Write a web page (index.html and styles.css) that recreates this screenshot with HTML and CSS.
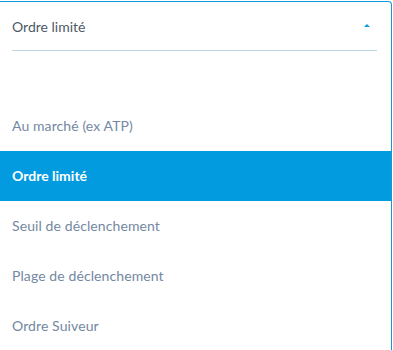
FILE: index.html
```html
<!DOCTYPE html>
<html lang="fr">
<head>
<meta charset="UTF-8">
<meta name="viewport" content="width=device-width, initial-scale=1.0">
<title>Type d'ordre</title>
<link rel="stylesheet" href="styles.css">
</head>
<body>

<div class="dropdown">
    <div class="select-head">
        <span class="select-value">Ordre limité</span>
        <span class="caret"></span>
    </div>
    <ul class="options">
        <li class="option spacer"></li>
        <li class="option">Au marché (ex ATP)</li>
        <li class="option selected">Ordre limité</li>
        <li class="option">Seuil de déclenchement</li>
        <li class="option">Plage de déclenchement</li>
        <li class="option">Ordre Suiveur</li>
    </ul>
</div>

</body>
</html>
```

FILE: styles.css
```css
body {
    font-family: Lato, "Open Sans", Arial, sans-serif;
    margin: 0;
    padding: 0;
    background: #fff;
}
.dropdown {
    margin: 1px 1px 0 -4px;
    border-top: 1px solid #0b9bd8;
    border-right: 1px solid #0b9bd8;
    border-top-right-radius: 4px;
    height: 348px;
    overflow: hidden;
}
.select-head {
    display: flex;
    align-items: center;
    justify-content: space-between;
    height: 48px;
    margin: 0 14px 0 16px;
    border-bottom: 1px solid #bdd4e4;
}
.select-value {
    font-size: 14px;
    color: #4e5a66;
}
.caret {
    width: 0;
    height: 0;
    border-left: 3px solid transparent;
    border-right: 3px solid transparent;
    border-bottom: 3px solid #0b9bd8;
    margin-right: 7px;
    margin-bottom: 2px;
}
.options {
    list-style: none;
    margin: 0;
    padding: 0;
}
.option {
    height: 50px;
    line-height: 50px;
    padding-left: 16px;
    font-size: 14px;
    letter-spacing: 0.1px;
    color: #7488a2;
}
.option.selected {
    background-color: #039be0;
    color: #fff;
    font-weight: bold;
    letter-spacing: 0;
}
```
